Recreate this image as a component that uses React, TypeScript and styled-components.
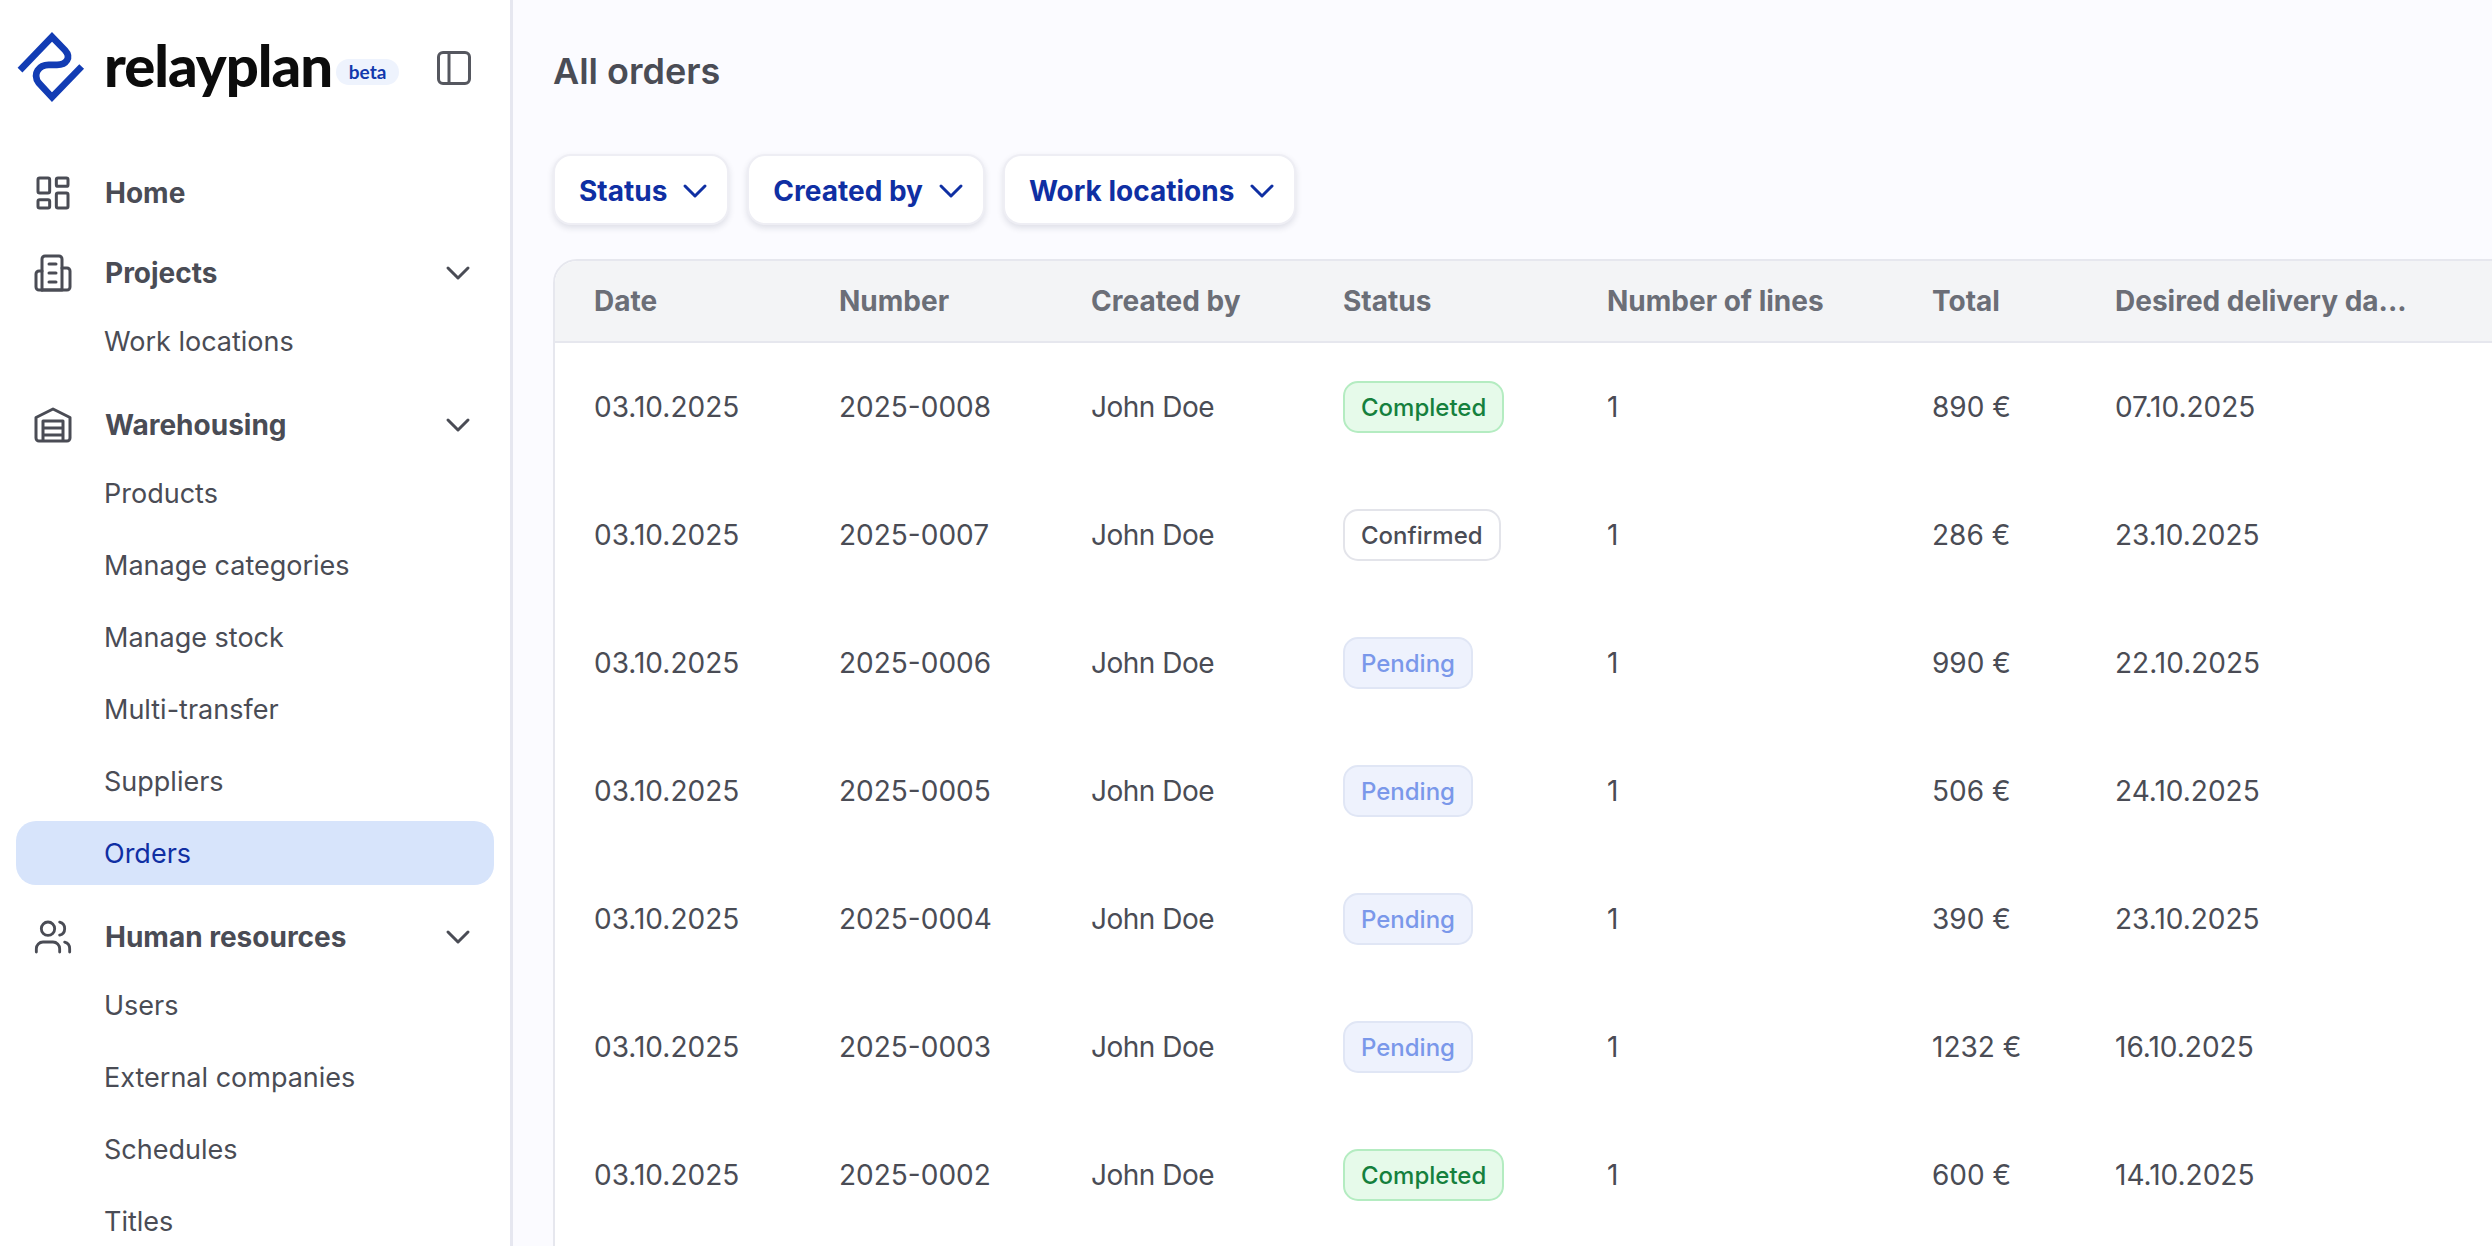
import React from 'react';
import styled, { createGlobalStyle, css } from 'styled-components';
import { ChevronDown, LayoutDashboard, Users } from 'lucide-react';

type OrderStatus = 'Completed' | 'Confirmed' | 'Pending';

interface Order {
  number: string;
  status: OrderStatus;
  total: string;
  delivery: string;
}

const orders: Order[] = [
  { number: '2025-0008', status: 'Completed', total: '890 €', delivery: '07.10.2025' },
  { number: '2025-0007', status: 'Confirmed', total: '286 €', delivery: '23.10.2025' },
  { number: '2025-0006', status: 'Pending', total: '990 €', delivery: '22.10.2025' },
  { number: '2025-0005', status: 'Pending', total: '506 €', delivery: '24.10.2025' },
  { number: '2025-0004', status: 'Pending', total: '390 €', delivery: '23.10.2025' },
  { number: '2025-0003', status: 'Pending', total: '1232 €', delivery: '16.10.2025' },
  { number: '2025-0002', status: 'Completed', total: '600 €', delivery: '14.10.2025' },
];

const statusColors = {
  Completed: { bg: '#e6faea', border: '#b4ecc1', text: '#15803d' },
  Confirmed: { bg: '#ffffff', border: '#e3e4ea', text: '#4a4c55' },
  Pending: { bg: '#eef2fd', border: '#e0e6f5', text: '#7a98ea' },
};

const GlobalStyle = createGlobalStyle`
  html, body {
    margin: 0;
    padding: 0;
    background: #fbfbff;
  }
  * {
    box-sizing: border-box;
  }
`;

const Page = styled.div`
  width: 2492px;
  height: 1246px;
  display: flex;
  overflow: hidden;
  font-family: Inter, "Liberation Sans", sans-serif;
  color: #4a4c55;
`;

const Sidebar = styled.aside`
  flex: 0 0 513px;
  height: 100%;
  padding: 0 16px;
  background: #ffffff;
  border-right: 3px solid #e6e7f0;
  overflow: hidden;
`;

const Brand = styled.div`
  height: 161px;
  padding: 32px 0 0 1px;
  display: flex;
  align-items: flex-start;
`;

const LogoMark = styled.svg`
  width: 70px;
  height: 72px;
  flex: none;
`;

const BrandName = styled.span`
  margin: -1px 0 0 17px;
  font-family: Lato, sans-serif;
  font-weight: 900;
  font-size: 58px;
  line-height: 68px;
  letter-spacing: -1px;
  color: #0c0c0c;
`;

const BetaTag = styled.span`
  margin: 27px 0 0 4px;
  width: 63px;
  height: 26px;
  border-radius: 13px;
  background: #eef3fd;
  color: #1239ad;
  font-family: Lato, sans-serif;
  font-weight: 700;
  font-size: 19px;
  line-height: 26px;
  text-align: center;
`;

const ToggleIcon = styled.svg`
  width: 34px;
  height: 34px;
  margin: 19px 0 0 38px;
  flex: none;
`;

const Nav = styled.nav`
  display: flex;
  flex-direction: column;
  gap: 16px;
`;

const Group = styled.div`
  display: flex;
  flex-direction: column;
  gap: 4px;
`;

const SubList = styled.div`
  display: flex;
  flex-direction: column;
  gap: 8px;
  margin-bottom: 4px;
`;

const itemBase = css`
  height: 64px;
  display: flex;
  align-items: center;
  border-radius: 20px;
`;

const GroupHeader = styled.div`
  ${itemBase}
  padding: 0 16px 0 17px;
  font-size: 28px;
  font-weight: 700;
  gap: 32px;
`;

const GroupLabel = styled.span`
  flex: 1;
`;

const IconSlot = styled.span`
  flex: none;
  width: 40px;
  height: 40px;
  display: flex;
  align-items: center;
  justify-content: center;
`;

const SubItem = styled.div<{ $active?: boolean }>`
  ${itemBase}
  padding-left: 88px;
  font-size: 27px;
  font-weight: 400;
  background: ${({ $active }) => ($active ? '#d7e4fb' : 'transparent')};
  color: ${({ $active }) => ($active ? '#0f2fa3' : '#4a4c55')};
`;

const Main = styled.main`
  flex: 1;
  min-width: 0;
  padding: 48px 0 0 40px;
  overflow: hidden;
`;

const Title = styled.h1`
  margin: 0;
  font-size: 36px;
  line-height: 46px;
  font-weight: 600;
  color: #4a4c55;
`;

const Filters = styled.div`
  display: flex;
  gap: 18px;
  margin-top: 60px;
`;

const FilterButton = styled.button`
  height: 71px;
  padding: 2px 12px 0 24px;
  display: flex;
  align-items: center;
  gap: 8px;
  border: 2px solid #eeeef4;
  border-radius: 18px;
  background: #ffffff;
  box-shadow: 0 3px 6px rgba(30, 35, 70, 0.13);
  color: #0f2fa3;
  font-family: inherit;
  font-size: 28px;
  font-weight: 700;
`;

const Table = styled.div`
  width: 2100px;
  min-height: 1100px;
  margin-top: 34px;
  background: #ffffff;
  border: 2px solid #e6e7ee;
  border-radius: 24px 0 0 0;
  overflow: hidden;
`;

const rowGrid = css`
  display: grid;
  grid-template-columns: 245px 252px 252px 264px 325px 183px 296px;
  align-items: center;
  padding-left: 39px;
`;

const HeadRow = styled.div`
  ${rowGrid}
  height: 82px;
  background: #f3f4f6;
  border-bottom: 2px solid #e6e7ee;
  font-size: 28px;
  font-weight: 700;
  color: #6b6e77;
`;

const HeadCell = styled.div`
  white-space: nowrap;
`;

const BodyRow = styled.div`
  ${rowGrid}
  height: 128px;
  font-size: 28px;
  color: #4a4c55;
`;

const PersonName = styled.div`
  letter-spacing: -0.5px;
`;

const Badge = styled.span<{ $status: OrderStatus }>`
  display: inline-flex;
  align-items: center;
  height: 52px;
  padding: 0 16px;
  border-radius: 15px;
  border: 2px solid ${({ $status }) => statusColors[$status].border};
  background: ${({ $status }) => statusColors[$status].bg};
  color: ${({ $status }) => statusColors[$status].text};
  font-size: 24px;
  font-weight: 500;
`;

const BuildingIcon = () => (
  <svg width="40" height="40" viewBox="0 0 40 40" fill="none" stroke="#4a4c55" strokeWidth="3" strokeLinecap="round" strokeLinejoin="round">
    <path d="M9 37V6a3 3 0 0 1 3-3h14a3 3 0 0 1 3 3v31z" />
    <path d="M9 18H6a3 3 0 0 0-3 3v13a3 3 0 0 0 3 3h3" />
    <path d="M29 15h5a3 3 0 0 1 3 3v16a3 3 0 0 1-3 3H9" />
    <path d="M16 11h7M16 20h7M16 29h7" />
  </svg>
);

const WarehouseIcon = () => (
  <svg width="40" height="36" viewBox="0 0 40 36" fill="none" stroke="#4a4c55" strokeWidth="3" strokeLinejoin="round">
    <path d="M3 10.5 20 2l17 8.5V31a3 3 0 0 1-3 3H6a3 3 0 0 1-3-3z" />
    <path d="M10 34V14h20v20M10 21h20M10 28h20" />
  </svg>
);

const columns = ['Date', 'Number', 'Created by', 'Status', 'Number of lines', 'Total', 'Desired delivery da...'];

const App = () => (
  <Page>
    <GlobalStyle />
    <Sidebar>
      <Brand>
        <LogoMark viewBox="50 97 210 215" fill="none" stroke="#123cb4" strokeWidth="20">
          <path d="M59 211 155 111l39 40c20 22 4 44-24 44h-25c-28 0-50 26-30 54l40 43 89-92" />
        </LogoMark>
        <BrandName>relayplan</BrandName>
        <BetaTag>beta</BetaTag>
        <ToggleIcon viewBox="0 0 34 34" fill="none" stroke="#55575f" strokeWidth="3">
          <rect x="1.5" y="1.5" width="31" height="31" rx="4.5" />
          <path d="M12 1.5v31" />
        </ToggleIcon>
      </Brand>
      <Nav>
        <GroupHeader>
          <IconSlot><LayoutDashboard size={40} strokeWidth={1.8} /></IconSlot>
          <GroupLabel>Home</GroupLabel>
        </GroupHeader>
        <Group>
          <GroupHeader>
            <IconSlot><BuildingIcon /></IconSlot>
            <GroupLabel>Projects</GroupLabel>
            <ChevronDown size={40} strokeWidth={1.8} />
          </GroupHeader>
          <SubList>
            <SubItem>Work locations</SubItem>
          </SubList>
        </Group>
        <Group>
          <GroupHeader>
            <IconSlot><WarehouseIcon /></IconSlot>
            <GroupLabel>Warehousing</GroupLabel>
            <ChevronDown size={40} strokeWidth={1.8} />
          </GroupHeader>
          <SubList>
            <SubItem>Products</SubItem>
            <SubItem>Manage categories</SubItem>
            <SubItem>Manage stock</SubItem>
            <SubItem>Multi-transfer</SubItem>
            <SubItem>Suppliers</SubItem>
            <SubItem $active>Orders</SubItem>
          </SubList>
        </Group>
        <Group>
          <GroupHeader>
            <IconSlot><Users size={42} strokeWidth={1.7} /></IconSlot>
            <GroupLabel>Human resources</GroupLabel>
            <ChevronDown size={40} strokeWidth={1.8} />
          </GroupHeader>
          <SubList>
            <SubItem>Users</SubItem>
            <SubItem>External companies</SubItem>
            <SubItem>Schedules</SubItem>
            <SubItem>Titles</SubItem>
          </SubList>
        </Group>
      </Nav>
    </Sidebar>
    <Main>
      <Title>All orders</Title>
      <Filters>
        {['Status', 'Created by', 'Work locations'].map((label) => (
          <FilterButton key={label}>
            {label}
            <ChevronDown size={40} strokeWidth={1.8} />
          </FilterButton>
        ))}
      </Filters>
      <Table>
        <HeadRow>
          {columns.map((column) => (
            <HeadCell key={column}>{column}</HeadCell>
          ))}
        </HeadRow>
        {orders.map((order) => (
          <BodyRow key={order.number}>
            <div>03.10.2025</div>
            <div>{order.number}</div>
            <PersonName>John Doe</PersonName>
            <div>
              <Badge $status={order.status}>{order.status}</Badge>
            </div>
            <div>1</div>
            <div>{order.total}</div>
            <div>{order.delivery}</div>
          </BodyRow>
        ))}
      </Table>
    </Main>
  </Page>
);

export default App;
